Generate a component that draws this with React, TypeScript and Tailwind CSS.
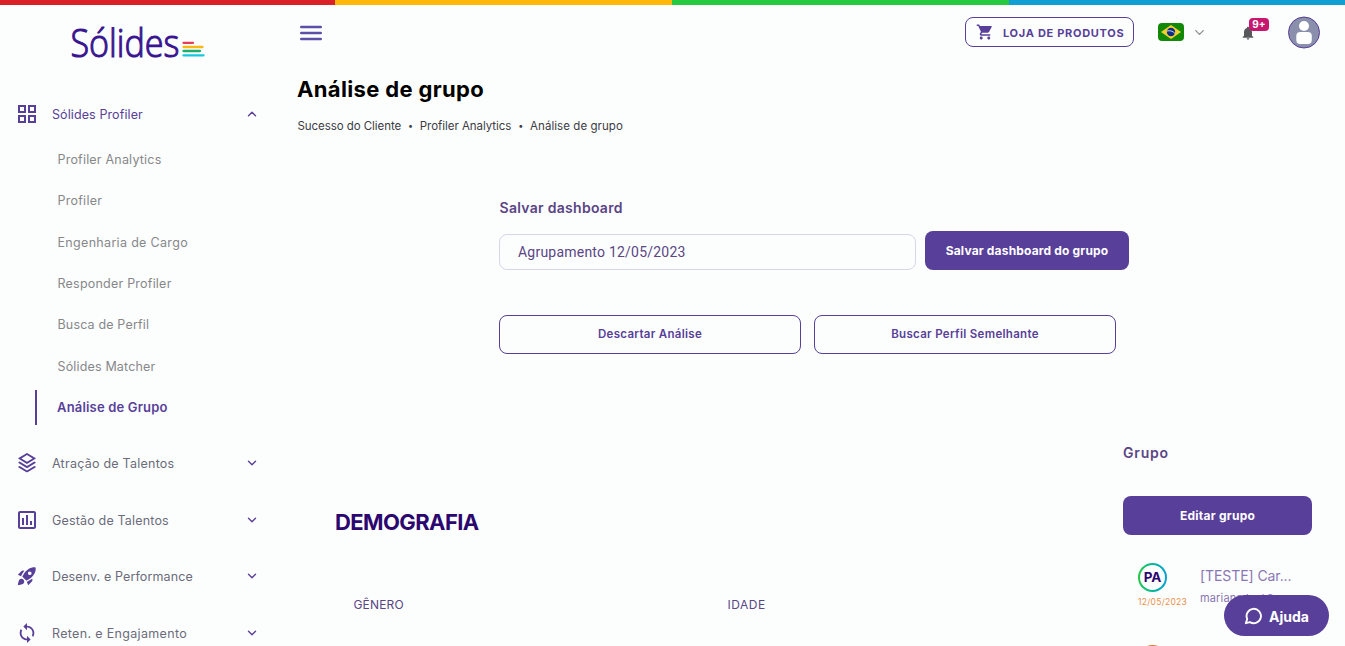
import { ReactNode } from "react";
import {
  MdRocketLaunch,
  MdSync,
  MdShoppingCart,
  MdNotifications,
} from "react-icons/md";
import { RiStackLine } from "react-icons/ri";
import { ChevronDown, ChevronUp } from "lucide-react";

const submenu = [
  { label: "Profiler Analytics", tracking: "tracking-[0.2px]" },
  { label: "Profiler", tracking: "tracking-[0.25px]" },
  { label: "Engenharia de Cargo", tracking: "tracking-[0.32px]" },
  { label: "Responder Profiler", tracking: "tracking-[0.22px]" },
  { label: "Busca de Perfil", tracking: "tracking-[0.16px]" },
  { label: "Sólides Matcher", tracking: "tracking-[0.16px]" },
  { label: "Análise de Grupo", tracking: "tracking-[0.18px]", active: true },
];

function GridIcon() {
  return (
    <svg viewBox="0 0 24 24" className="h-6 w-6" fill="currentColor" fillRule="evenodd">
      <path d="M3 3h8v8H3V3m2 2v4h4V5H5m8-2h8v8h-8V3m2 2v4h4V5h-4M3 13h8v8H3v-8m2 2v4h4v-4H5m8-2h8v8h-8v-8m2 2v4h4v-4h-4Z" />
    </svg>
  );
}

function ChartBoxIcon() {
  return (
    <svg viewBox="0 0 24 24" className="h-6 w-6" fill="currentColor">
      <path d="M9 17H7v-7h2v7m4 0h-2V7h2v10m4 0h-2v-4h2v4m2 2H5V5h14v14m0-16H5c-1.1 0-2 .9-2 2v14c0 1.1.9 2 2 2h14c1.1 0 2-.9 2-2V5c0-1.1-.9-2-2-2Z" />
    </svg>
  );
}

const sections = [
  {
    label: "Atração de Talentos",
    icon: <RiStackLine className="h-[22px] w-[22px]" />,
    tracking: "tracking-[0.24px]",
  },
  {
    label: "Gestão de Talentos",
    icon: <ChartBoxIcon />,
    tracking: "tracking-[0.17px]",
  },
  {
    label: "Desenv. e Performance",
    icon: <MdRocketLaunch className="h-[22px] w-[22px]" />,
    tracking: "tracking-[0.12px]",
  },
  {
    label: "Reten. e Engajamento",
    icon: <MdSync className="h-[22px] w-[22px]" />,
    tracking: "tracking-[0.33px]",
  },
];

function Logo() {
  return (
    <svg viewBox="0 0 140 56" className="ml-[68px] h-[56px] w-[140px]">
      <text
        x="2.5"
        y="40.5"
        textLength="109"
        lengthAdjust="spacingAndGlyphs"
        className="font-['Open_Sans',sans-serif] text-[39px] font-light"
        fill="#3a1591"
        stroke="#3a1591"
        strokeWidth="1.1"
      >
        Sólides
      </text>
      <g strokeWidth="2.3" strokeLinecap="round">
        <path d="M115.5 26.8h9.5" stroke="#e0405a" />
        <path d="M115.5 31h19" stroke="#fbb814" />
        <path d="M115.5 35h16.5" stroke="#1bae6c" />
        <path d="M115.5 39.3h20" stroke="#17c5dc" />
      </g>
    </svg>
  );
}

function BrazilFlag() {
  return (
    <svg viewBox="0 0 26 18" className="h-[18px] w-[26px] rounded">
      <rect width="26" height="18" fill="#128807" />
      <path d="M13 2l10 7-10 7L3 9z" fill="#f5cf2f" />
      <circle cx="13" cy="9" r="4.2" fill="#0b2d83" />
      <path d="M9 8c3-.8 6 .2 8 2.4" fill="none" stroke="#e8eef5" strokeWidth="0.9" />
    </svg>
  );
}

function Avatar() {
  return (
    <svg viewBox="0 0 32 33" className="h-[33px] w-8">
      <circle cx="16" cy="16.5" r="15.5" fill="#8a8fab" stroke="#583f99" />
      <circle cx="16" cy="10" r="5" fill="#fff" />
      <rect x="8.3" y="16" width="15.5" height="12" rx="4" fill="#fff" />
    </svg>
  );
}

interface MenuRowProps {
  icon: ReactNode;
  label: string;
  tracking: string;
  open?: boolean;
}

function MenuRow({ icon, label, tracking, open }: MenuRowProps) {
  const color = open ? "text-[#583f99]" : "text-[#6b6b7b]";

  return (
    <div className="flex h-6 items-center">
      <span className="flex w-6 justify-center text-[#583f99]">{icon}</span>
      <span className={`ml-[13px] pt-0.5 text-[12.5px] ${color} ${tracking}`}>{label}</span>
      <span className="ml-auto text-[#583f99]">
        {open ? (
          <ChevronUp size={14} strokeWidth={2.4} />
        ) : (
          <ChevronDown size={14} strokeWidth={2.4} />
        )}
      </span>
    </div>
  );
}

function Sidebar() {
  return (
    <aside className="w-[282px] shrink-0 pr-[23px] pt-[11px]">
      <Logo />
      <div className="mt-[30px] pl-[15px]">
        <MenuRow icon={<GridIcon />} label="Sólides Profiler" tracking="tracking-[0.1px]" open />
      </div>
      <ul className="mt-[13px]">
        {submenu.map((item) => (
          <li key={item.label} className="flex h-[41.35px] items-center">
            {item.active ? (
              <span
                className={`ml-[35px] flex h-[35px] items-center border-l-2 border-[#583f99] pl-5 pt-px text-[13px] font-semibold text-[#583f99] ${item.tracking}`}
              >
                {item.label}
              </span>
            ) : (
              <span className={`ml-[57.5px] pt-[1.5px] text-[12.5px] text-[#87878b] ${item.tracking}`}>
                {item.label}
              </span>
            )}
          </li>
        ))}
      </ul>
      <div className="mt-[23px] flex flex-col gap-[32.5px] pl-[15px]">
        {sections.map((s) => (
          <MenuRow key={s.label} icon={s.icon} label={s.label} tracking={s.tracking} />
        ))}
      </div>
    </aside>
  );
}

function Header() {
  return (
    <header className="flex h-[54px] items-center pr-[25px]">
      <svg viewBox="0 0 22 16" className="ml-[18px] mt-0.5 h-4 w-[22px]" stroke="#5b4fa8" strokeWidth="2.4" strokeLinecap="round">
        <path d="M1.2 2h19.6M1.2 8h19.6M1.2 14h19.6" />
      </svg>
      <button className="ml-auto flex h-[30px] w-[169px] items-center whitespace-nowrap rounded-lg border border-[#583f99] pl-2.5 text-[11px] font-bold tracking-[0.7px] text-[#583f99]">
        <MdShoppingCart className="mr-[9px] h-[18px] w-[18px]" />
        <span className="pt-0.5">LOJA DE PRODUTOS</span>
      </button>
      <div className="ml-6 flex items-center gap-2">
        <BrazilFlag />
        <ChevronDown size={15} className="text-[#8b8b8b]" />
      </div>
      <div className="relative ml-[33px]">
        <MdNotifications className="mt-0.5 h-4 w-4 text-[#58585c]" />
        <span className="absolute -top-[5px] left-[9px] flex h-[13px] w-5 items-center justify-center rounded-sm bg-[#c6186f] text-[10px] font-bold text-white">
          9+
        </span>
      </div>
      <div className="ml-8">
        <Avatar />
      </div>
    </header>
  );
}

function SaveForm() {
  return (
    <section className="ml-[217.5px] mt-[64px] w-[630px]">
      <h2 className="text-[14px] font-semibold leading-5 tracking-[0.29px] text-[#5a4585]">
        Salvar dashboard
      </h2>
      <div className="-ml-[0.5px] mt-[13px] flex items-end">
        <div className="flex h-9 w-[417px] items-center rounded-lg border border-[#d3d7e6] pl-[18px] font-[Roboto,sans-serif] text-[14px] tracking-[0.22px] text-[#5a4585]">
          Agrupamento 12/05/2023
        </div>
        <button className="ml-[9px] h-[39px] w-[204px] rounded-lg bg-[#583f99] text-[12px] font-bold tracking-[0.17px] text-white">
          Salvar dashboard do grupo
        </button>
      </div>
      <div className="-ml-[0.5px] mt-[45px] flex gap-[13px]">
        <button className="h-[39px] w-[302px] rounded-lg border border-[#583f99] text-[11.5px] font-semibold tracking-[0.3px] text-[#583f99]">
          Descartar Análise
        </button>
        <button className="h-[39px] w-[302px] rounded-lg border border-[#583f99] text-[11.5px] font-semibold tracking-[0.32px] text-[#583f99]">
          Buscar Perfil Semelhante
        </button>
      </div>
    </section>
  );
}

function GroupPanel() {
  return (
    <section className="w-[189px]">
      <h2 className="text-[14px] font-semibold leading-5 tracking-[0.8px] text-[#5a4585]">Grupo</h2>
      <button className="mt-[33px] h-[39px] w-full rounded-lg bg-[#583f99] pt-px text-[12px] font-bold tracking-[0.25px] text-white">
        Editar grupo
      </button>
      <div className="mt-7 flex">
        <div className="ml-[15px] w-[62px]">
          <div className="h-[29px] w-[29px] rounded-full bg-linear-to-r from-[#27c93f] to-[#109fd3] p-0.5">
            <div className="flex h-full w-full items-center justify-center rounded-full bg-[#fcfefd] text-[13.5px] font-bold text-[#2c0770]">
              PA
            </div>
          </div>
          <p className="mt-1 text-[8.5px] leading-3 tracking-[0.28px] text-[#ea8f4c]">12/05/2023</p>
        </div>
        <div className="min-w-0 flex-1 whitespace-nowrap">
          <p className="mt-[3px] text-[14px] leading-5 tracking-[-0.08px] text-[#8a76b4]">[TESTE] Car...</p>
          <p className="mt-[4px] text-[11px] leading-4 tracking-[0.15px] text-[#8a76b4]">mariana.leal@</p>
        </div>
      </div>
      <div className="ml-[15px] mt-[37px] h-[29px] w-[29px] rounded-full border-2 border-[#e0762f]" />
    </section>
  );
}

export default function App() {
  return (
    <div className="relative h-[646px] w-[1345px] overflow-hidden bg-[#fcfefd] font-[Inter,sans-serif]">
      <div className="flex h-[5px]">
        <div className="w-[335px] bg-[#da2128]" />
        <div className="w-[337px] bg-[#ffb80a]" />
        <div className="w-[337px] bg-[#27c93f]" />
        <div className="flex-1 bg-[#109fd3]" />
      </div>
      <div className="flex">
        <Sidebar />
        <main className="min-w-0 flex-1">
          <Header />
          <h1 className="ml-[15px] mt-[15px] text-[22px] font-bold leading-[30px] tracking-[0.35px] text-black">
            Análise de grupo
          </h1>
          <nav className="ml-[15.5px] mt-[14px] flex items-center gap-[6.8px] text-[11.5px] leading-4 text-[#3b3b45]">
            <span className="tracking-[-0.06px]">Sucesso do Cliente</span>
            <span className="text-[9px]">•</span>
            <span className="tracking-[-0.04px]">Profiler Analytics</span>
            <span className="text-[9px]">•</span>
            <span className="tracking-[0.06px]">Análise de grupo</span>
          </nav>
          <SaveForm />
          <div className="mt-[89px] flex">
            <section className="w-[841px] pl-[53px] pt-[64px]">
              <h2 className="text-[22px] font-bold leading-[30px] tracking-[-0.6px] text-[#2c0770]">
                DEMOGRAFIA
              </h2>
              <div className="ml-[18.5px] mt-[58px] flex text-[12px] leading-5 tracking-[0.15px] text-[#5a4585]">
                <span className="w-[374px]">GÊNERO</span>
                <span className="tracking-[0.5px]">IDADE</span>
              </div>
            </section>
            <GroupPanel />
          </div>
        </main>
      </div>
      <button className="absolute bottom-[10px] right-4 flex h-[41px] w-[105px] items-center rounded-full bg-[#583f99] pl-5 text-[14px] font-bold text-white">
        <svg viewBox="0 0 20 20" className="mr-[7px] h-[18px] w-[18px]" fill="none" stroke="currentColor" strokeWidth="2.1">
          <path d="M2 18l1.6-4.6A8 8 0 1 1 6.6 16.8z" strokeLinejoin="round" />
        </svg>
        <span className="pt-0.5">Ajuda</span>
      </button>
    </div>
  );
}
